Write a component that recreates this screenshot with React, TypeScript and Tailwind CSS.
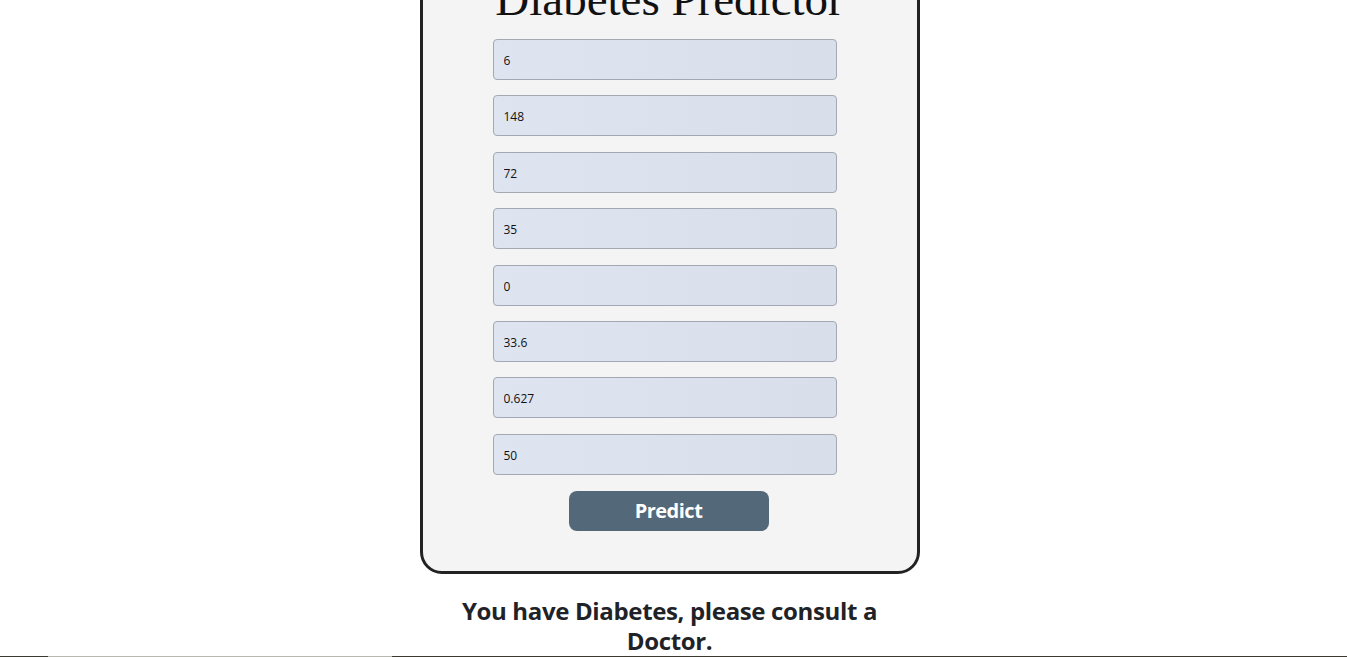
import { useState } from "react"

const fields = ["6", "148", "72", "35", "0", "33.6", "0.627", "50"]

export default function App() {
  const [values, setValues] = useState(fields)

  return (
    <div className="h-[657px] overflow-hidden bg-white flex flex-col">
      <div className="flex flex-col items-center pr-[8px]">
        {/* Card */}
        <div className="-mt-[60px] w-[500px] shrink-0 border-[3px] border-[#222] rounded-[22px] bg-[#f4f4f4] pt-[32px] pb-[40px] flex flex-col items-center">
          <h1 className="font-['Liberation_Serif',serif] text-[47px] leading-[48px] text-[#111] font-normal">
            Diabetes Predictor
          </h1>

          <div className="mt-[16px] mr-[10px] flex flex-col gap-[15.4px]">
            {values.map((v, i) => (
              <input
                key={i}
                type="text"
                value={v}
                onChange={(e) => {
                  const next = [...values]
                  next[i] = e.target.value
                  setValues(next)
                }}
                className="w-[344px] h-[41px] px-[10px] pt-[2px] rounded-[4px] border border-[#a3a8b2] bg-gradient-to-r from-[#dee4f0] to-[#d8deea] text-[12px] text-[#111] font-['Open_Sans',sans-serif] focus:outline-none"
              />
            ))}
          </div>

          <button className="mt-[16px] mr-[2px] w-[200px] h-[40px] rounded-[8px] bg-[#536878] text-white text-[20px] tracking-[-0.5px] font-bold font-['Open_Sans',sans-serif]">
            Predict
          </button>
        </div>

        {/* Result */}
        <p className="mt-[22px] w-[440px] shrink-0 text-center text-[24px] leading-[30px] tracking-[-0.35px] font-bold text-[#1f2328] font-['Open_Sans',sans-serif]">
          You have Diabetes, please consult a Doctor.
        </p>
      </div>

      {/* Next section edge */}
      <div className="mt-auto w-full h-[1px] shrink-0 flex">
        <div className="w-[48px] bg-[#3a3a32]" />
        <div className="w-[344px] bg-[#b8b8b0]" />
        <div className="flex-1 bg-[#3c3a30]" />
      </div>
    </div>
  )
}
